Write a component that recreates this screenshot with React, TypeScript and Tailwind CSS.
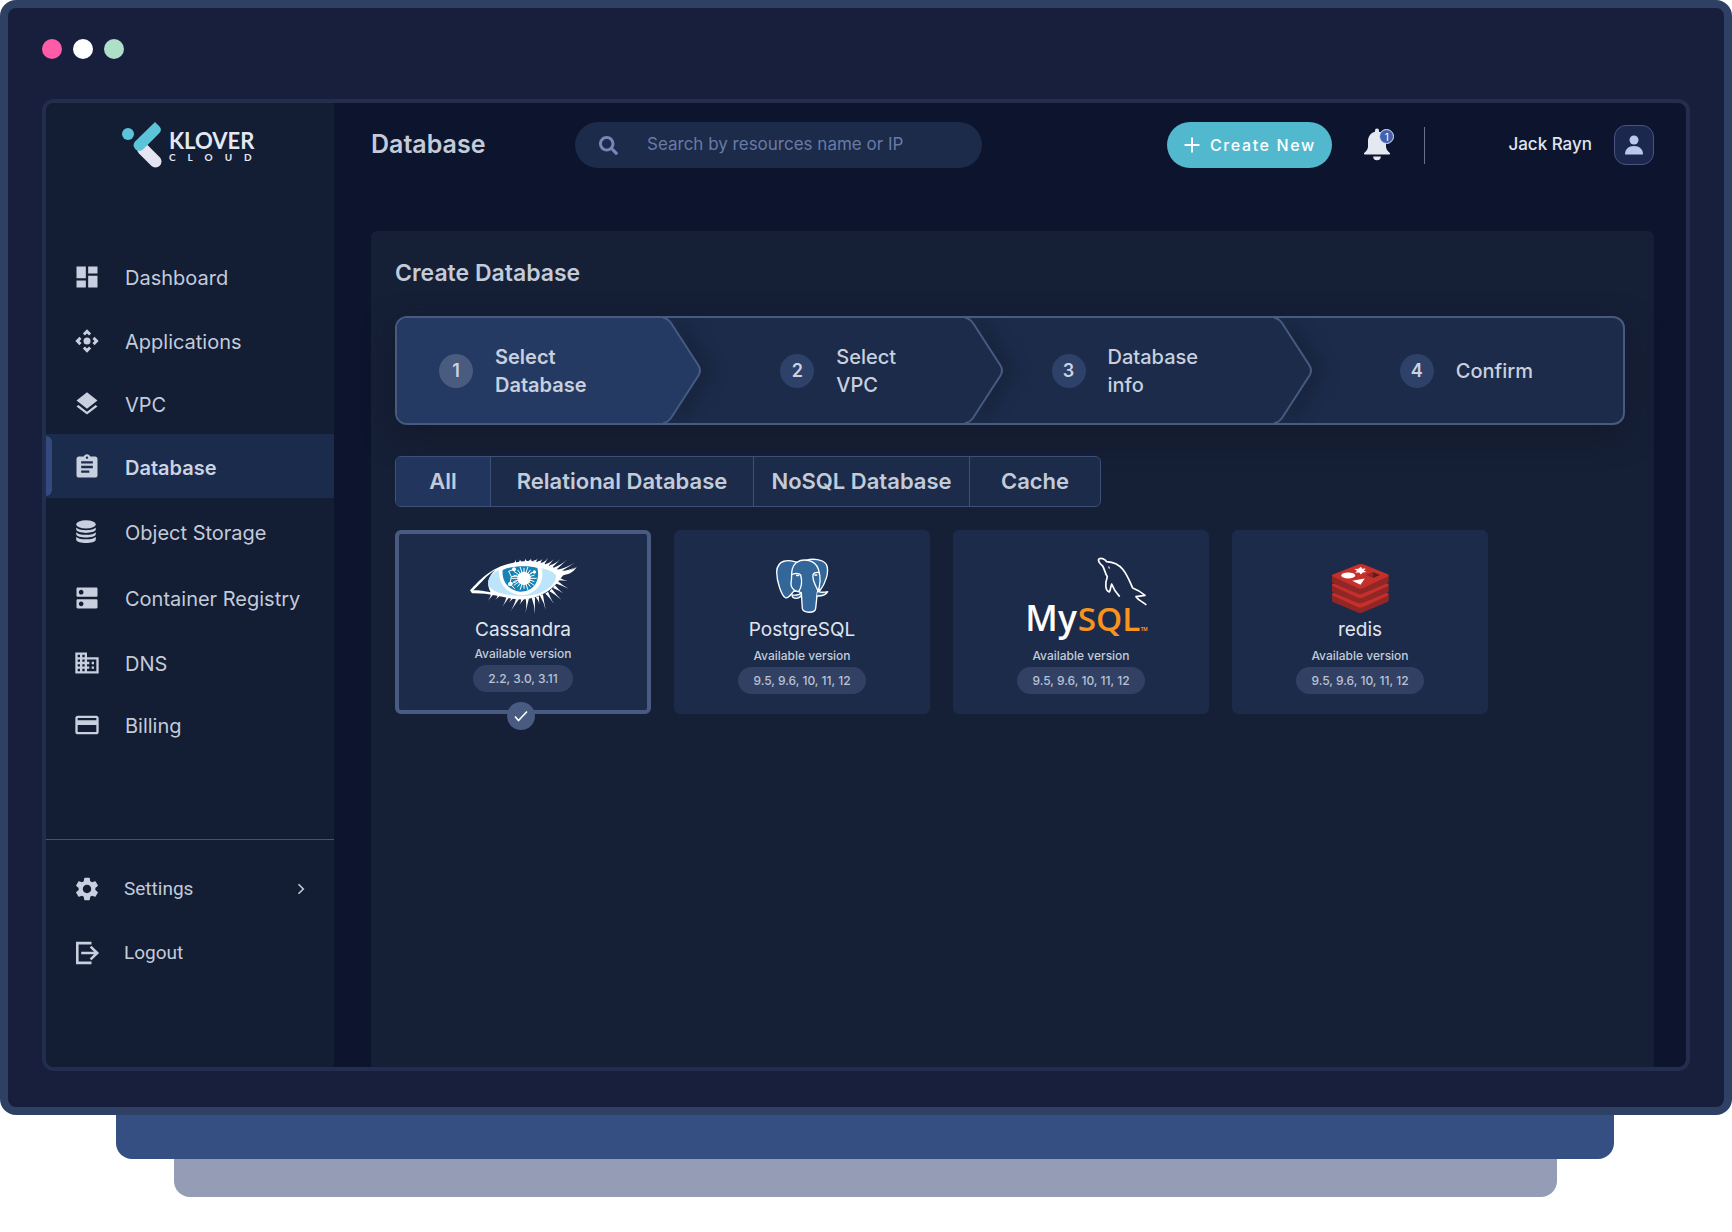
import React from "react";
import {
  MdAssignment,
  MdBusiness,
  MdControlCamera,
  MdCreditCard,
  MdDashboard,
  MdDns,
  MdLayers,
  MdSettings,
} from "react-icons/md";
import { FaSearch } from "react-icons/fa";

const StorageIcon = ({ className }: { className?: string }) => (
  <svg viewBox="0 0 28 28" fill="currentColor" className={className} aria-hidden="true">
    <ellipse cx="13" cy="6.4" rx="9.8" ry="4.2" />
    <path d="M3.2 9.6c2 3.4 17.6 3.4 19.6 0v2c-.6 4.4-19 4.4-19.6 0z" />
    <path d="M3.2 14.2c2 3.4 17.6 3.4 19.6 0v2c-.6 4.4-19 4.4-19.6 0z" />
    <path d="M3.2 18.8c2 3.4 17.6 3.4 19.6 0v3c-.6 4.4-19 4.4-19.6 0z" />
  </svg>
);

const LogoutIcon = ({ className }: { className?: string }) => (
  <svg viewBox="0 0 28 28" fill="none" stroke="currentColor" strokeWidth="2.6" className={className} aria-hidden="true">
    <path d="M18.5 4.1H4.3v19.8h14.2" />
    <path d="M8.2 14h15.600M17.600 7.600l6.600 6.400-6.600 6.400" />
  </svg>
);

const Logo = () => (
  <div className="flex items-center gap-[7px] pl-[75px] pt-[18px]">
    <svg viewBox="121 121 41 47" className="h-[47px] w-[41px]" aria-hidden="true">
      <path d="M143 149l12.500 12.500" stroke="#e3e6f2" strokeWidth="12" strokeLinecap="round" />
      <circle cx="128" cy="134" r="6" fill="#5cc4d9" />
      <path
        d="M155 122l4.500 4.500q3 3.500-.5 7l-15.500 15.500q-4 4-8 .3-3.800-4-.2-8z"
        fill="#5cc4d9"
      />
    </svg>
    <div className="pt-1 text-[#e3e8f2]">
      <div className="font-['Lato'] text-[22px] font-bold leading-5">KLOVER</div>
      <div className="font-['Lato'] text-[10px] font-bold leading-3 tracking-[12px]">CLOUD</div>
    </div>
  </div>
);

const navItems = [
  { label: "Dashboard", Icon: MdDashboard, height: "h-16" },
  { label: "Applications", Icon: MdControlCamera, height: "h-16" },
  { label: "VPC", Icon: MdLayers, height: "h-[62px]" },
  { label: "Database", Icon: MdAssignment, height: "h-16", active: true },
  { label: "Object Storage", Icon: StorageIcon, height: "h-[66px]" },
  { label: "Container Registry", Icon: MdDns, height: "h-[66px]" },
  { label: "DNS", Icon: MdBusiness, height: "h-16" },
  { label: "Billing", Icon: MdCreditCard, height: "h-[60px]" },
];

const Sidebar = () => (
  <aside className="w-72 shrink-0 bg-[#131d34] pb-[82px] text-[#c3cbd9]">
    <div className="h-[141px]">
      <Logo />
    </div>
    <nav>
      <ul>
        {navItems.map(({ label, Icon, height, active }) => (
          <li key={label} className="relative">
            {active && <span className="absolute inset-y-[2px] left-0 w-[6px] rounded-r-[6px] bg-[#34497f]" />}
            <a
              href="#"
              aria-current={active ? "page" : undefined}
              className={`flex items-center gap-6 pl-[27px] pt-[2px] text-xl ${height} ${
                active ? "bg-[#1a2b4b] font-semibold text-[#ccd3e2]" : ""
              }`}
            >
              <Icon className="size-7 shrink-0 text-[#c8cfde]" />
              <span className="pt-[2px]">{label}</span>
            </a>
          </li>
        ))}
      </ul>
    </nav>
    <div className="mt-[85px] border-t border-[#46516d] pt-[17px] font-['Roboto'] text-[19px]">
      <a href="#" className="flex h-16 items-center gap-[23px] pl-[27px] pr-[29px]">
        <MdSettings className="size-7 shrink-0 text-[#c8cfde]" />
        <span className="grow">Settings</span>
        <svg viewBox="0 0 8 12" className="h-3 w-2" fill="none" stroke="currentColor" strokeWidth="1.6" aria-hidden="true">
          <path d="M1.500 1.200L6.300 6l-4.800 4.800" />
        </svg>
      </a>
      <a href="#" className="flex h-16 items-center gap-[23px] pl-[27px]">
        <LogoutIcon className="size-7 shrink-0 text-[#c8cfde]" />
        <span>Logout</span>
      </a>
    </div>
  </aside>
);

const Header = () => (
  <header className="flex items-center pt-[19px]">
    <h1 className="w-[204px] shrink-0 text-[25px] font-semibold text-[#c3cbd9]">Database</h1>
    <div className="flex h-[46px] w-[407px] items-center gap-[29px] rounded-full bg-[#1b2b49] px-6">
      <FaSearch className="size-[19px] shrink-0 text-[#7587b8]" aria-hidden="true" />
      <input
        type="search"
        aria-label="Search by resources name or IP"
        placeholder="Search by resources name or IP"
        className="w-full min-w-0 bg-transparent text-[17px] text-[#c3cbd9] outline-none placeholder:text-[#6a7aa6]"
      />
    </div>
    <div className="ml-auto flex items-center">
      <button
        type="button"
        className="flex h-[46px] w-[165px] items-center justify-center gap-[10px] rounded-full bg-[#52b8cd] text-base font-medium tracking-widest text-white"
      >
        <svg viewBox="0 0 16 16" className="size-4 shrink-0" stroke="currentColor" strokeWidth="2" aria-hidden="true">
          <path d="M8 .5v15M.5 8h15" />
        </svg>
        <span className="whitespace-nowrap">Create New</span>
      </button>
      <button type="button" aria-label="Notifications" className="relative ml-[31px] h-9 w-[31px]">
        <svg viewBox="0 0 28 34" className="h-[34px] w-7" fill="#e3e8f1" aria-hidden="true">
          <path d="M14 .5a2 2 0 0 0-2 2.200v1C7.500 5 5 8.500 5 13v5.500c0 2.500-1.500 4.500-3.800 6.500-.6.700-.2 1.500.6 1.500h24.400c.8 0 1.200-.8.6-1.500-2.300-2-3.800-4-3.800-6.500V13c0-4.500-2.500-8-7-9.300v-1a2 2 0 0 0-2-2.200z" />
          <path d="M10.200 28.500h7.600a3.800 3.800 0 0 1-7.600 0z" />
        </svg>
        <span className="absolute right-0 top-[2px] flex size-[15px] items-center justify-center rounded-full border border-[#dfe5f0] bg-[#4063b0] text-[10px] leading-none text-white">
          1
        </span>
      </button>
      <span className="ml-[30px] h-[37px] w-px bg-[#6b7189]" />
      <span className="ml-[83px] text-[17px] font-medium text-[#e0e5ee]">Jack Rayn</span>
      <button
        type="button"
        aria-label="Account"
        className="ml-[22px] flex size-10 items-center justify-center rounded-xl border border-[#4a5482] bg-[#1c274e]"
      >
        <svg viewBox="0 0 18 20" className="h-5 w-[18px]" fill="#b9c8ee" aria-hidden="true">
          <circle cx="9" cy="5" r="4.500" />
          <path d="M0 19.500c0-5.500 3.500-8.500 9-8.500s9 3 9 8.500z" />
        </svg>
      </button>
    </div>
  </header>
);

const steps = [
  { lines: ["Select", "Database"], pad: "pl-[42px]", active: true },
  { lines: ["Select", "VPC"], pad: "pl-[79px]" },
  { lines: ["Database", "info"], pad: "pl-[49px]" },
  { lines: ["Confirm"], pad: "pl-[88px]" },
];

const Stepper = () => (
  <ol className="grid h-[109px] grid-cols-[305fr_302fr_310fr_312fr] overflow-hidden rounded-xl border-2 border-[#475a80] bg-[#1b2b49] shadow-[0_10px_30px_rgba(20,24,36,0.6)]">
    {steps.map(({ lines, pad, active }, i) => (
      <li key={i} className="flex min-w-0" aria-current={active ? "step" : undefined}>
        <div className={`flex min-w-0 grow items-center gap-[22px] ${pad} ${active ? "bg-[#243a63]" : ""}`}>
          <span
            className={`flex size-[34px] shrink-0 items-center justify-center rounded-full text-lg font-semibold text-[#ccd3e2] ${
              active ? "bg-[#495b7f]" : "bg-[#2d4169]"
            }`}
          >
            {i + 1}
          </span>
          <span className={`text-xl leading-7 text-[#c8d0de] ${active ? "font-semibold" : "font-medium"}`}>
            {lines.map((line) => (
              <span key={line} className="block">
                {line}
              </span>
            ))}
          </span>
        </div>
        {i < steps.length - 1 && (
          <svg
            viewBox="0 0 38 105"
            className="h-full w-[38px] shrink-0 overflow-visible drop-shadow-[14px_0_7px_rgba(20,26,46,0.35)]"
            aria-hidden="true"
          >
            <path
              d="M-1 0C3 0 5 1 8 5L35.500 47.500Q38.500 52.500 35.500 57.500L8 100Q4 105-1 105z"
              fill={active ? "#243a63" : "#1b2b49"}
            />
            <path
              d="M0 0C3 0 5 1 8 5L35.500 47.500Q38.500 52.500 35.500 57.500L8 100Q4 105 0 105"
              fill="none"
              stroke="#475a80"
              strokeWidth="2"
            />
          </svg>
        )}
      </li>
    ))}
  </ol>
);

const filters = [
  { label: "All", width: "w-[94px]" },
  { label: "Relational Database", width: "w-[263px]" },
  { label: "NoSQL Database", width: "w-[216px]" },
  { label: "Cache", width: "w-[131px]" },
];

const Filters = () => (
  <div className="mt-[31px] flex h-[51px] w-fit overflow-hidden rounded-md border border-[#3d5078] bg-[#1b2b49]">
    {filters.map(({ label, width }, i) => (
      <button
        key={label}
        type="button"
        aria-pressed={i === 0}
        className={`text-[22px] font-semibold text-[#c3cbda] ${width} ${
          i === 0 ? "bg-[#22365d]" : "border-l border-[#3d5078]"
        }`}
      >
        {label}
      </button>
    ))}
  </div>
);

// Each lash: base x, base y, tip x, tip y.
const lashes = [
  [338, 248, 323, 273], [358, 252, 345, 270], [385, 256, 366, 291], [398, 260, 386, 278],
  [414, 262, 389, 307], [428, 264, 418, 284], [442, 264, 436, 310], [460, 262, 465, 313],
  [472, 260, 478, 283], [484, 254, 497, 299], [500, 248, 521, 281], [512, 240, 544, 269],
  [522, 230, 550, 250], [528, 215, 566, 236], [532, 206, 565, 212], [405, 160, 406, 148],
  [420, 156, 419, 147], [436, 154, 435, 145], [450, 154, 453, 144], [463, 155, 473, 145],
  [476, 158, 488, 145], [488, 162, 505, 142], [500, 166, 522, 146], [512, 170, 542, 146],
  [524, 177, 563, 147], [534, 184, 588, 156], [542, 190, 594, 168],
];

const lashPath = lashes
  .map(([x, y, tx, ty]) => {
    const length = Math.hypot(tx - x, ty - y);
    const nx = (-(ty - y) / length) * 5;
    const ny = ((tx - x) / length) * 5;
    const cx = (x + tx) / 2 + 2;
    const cy = (y + ty) / 2 + 2;
    return `M${x + nx} ${y + ny}Q${cx} ${cy} ${tx} ${ty}Q${cx} ${cy} ${x - nx} ${y - ny}z`;
  })
  .join("");

const rays = Array.from({ length: 20 }, (_, i) => {
  const angle = (i * Math.PI) / 10;
  const reach = i % 2 ? 33 : 38;
  return `M432 205L${432 + Math.cos(angle) * reach} ${205 + Math.sin(angle) * reach * 0.95}`;
}).join("");

const CassandraLogo = () => (
  <svg viewBox="264 138 330 180" className="h-[60px] w-[110px] overflow-visible" aria-hidden="true">
    <path d="M270 241C305 205 340 160 440 153C500 153 525 178 556 192C535 202 530 250 440 268C380 272 350 248 276 250z" fill="#fff" />
    <path d="M280 241C308 214 322 194 346 180C322 200 320 225 332 247C310 243 300 241 280 241z" fill="#1b2b49" />
    <path d="M350 184C380 168 500 160 528 196C530 225 490 256 430 258C390 258 340 250 326 228C320 210 330 196 350 184z" fill="#bce4fb" />
    <path d="M357 172C385 160 455 158 484 170C497 215 470 254 425 256C380 252 352 220 357 172z" fill="#fff" />
    <path d="M368 180C395 166 450 166 472 174C480 200 470 245 420 245C385 240 365 215 368 180z" fill="#1583b5" />
    <circle cx="432" cy="205" r="20" fill="#fff" />
    <path d={rays} stroke="#fff" strokeWidth="3" />
    <path d="M402 178L386 184L394 200L390 222L404 236M394 200L412 198M390 222L410 215M450 190L463 186" stroke="#fff" strokeWidth="3" fill="none" />
    <circle cx="402" cy="178" r="6" fill="#fff" />
    <circle cx="391" cy="222" r="7" fill="#fff" />
    <circle cx="463" cy="186" r="5" fill="#fff" />
    <path d={lashPath} fill="#fff" />
    <path d="M510 168C535 182 560 190 590 172C575 194 550 200 524 192z" fill="#fff" />
  </svg>
);

const PostgresLogo = () => (
  <svg viewBox="342 136 168 174" className="h-[58px] w-14" fill="#336699" stroke="#fff" strokeWidth="4" strokeLinejoin="round" strokeLinecap="round" aria-hidden="true">
    <path d="M438 146C458 140 488 142 499 158C510 180 495 218 479 238L460 190z" />
    <path d="M411 152C385 142 352 144 350 180C350 210 365 253 376 258C386 262 392 248 402 238L420 200z" />
    <path d="M410 152C432 138 466 146 475 172C482 195 484 218 472 242L467 290C465 306 430 305 427 291L424 244C410 240 392 234 393 214C398 195 388 170 410 152z" />
    <path d="M397 188Q414 181 422 190C427 208 425 226 416 240M478 183Q462 180 459 190C456 206 468 222 474 238" fill="none" />
    <path d="M404 239Q414 236 424 244Q416 252 396 250Q396 260 410 260Q422 258 424 250" />
    <path d="M474 239Q484 244 503 240Q496 254 470 253" />
    <path d="M410 191h6M465 190h5" strokeWidth="5" />
  </svg>
);

const MySqlLogo = () => (
  <svg viewBox="218 138 414 252" className="h-[84px] w-[138px] overflow-visible" role="img" aria-label="MySQL">
    <path
      d="M541 260C530 248 522 236 517 222C513 232 514 241 510 246C498 242 496 222 504 200C497 190 496 178 490 168C480 160 474 150 480 146C488 143 498 149 502 155C548 157 562 192 580 234C596 240 608 248 617 256L590 260C598 272 612 276 621 285"
      fill="none"
      stroke="#fff"
      strokeWidth="5"
      strokeLinejoin="round"
    />
    <path d="M507 167q6 3 4 11q-5-3-4-11z" fill="#fff" />
    <text x="258" y="364" fontFamily="'Open Sans', sans-serif" fontSize="106" fontWeight="600" fill="#fff">
      My
    </text>
    <text x="415" y="364" fontFamily="'Open Sans', sans-serif" fontSize="100" fontWeight="600" fill="#f7941e">
      SQL
    </text>
    <text x="604" y="363" fontFamily="'Open Sans', sans-serif" fontSize="14" fontWeight="700" fill="#f7941e">
      TM
    </text>
  </svg>
);

const RedisLogo = () => (
  <svg viewBox="333 155 178 153" className="mt-1 h-[51px] w-[59px]" aria-hidden="true">
    {[57, 28.5, 0].map((dy) => (
      <g key={dy} transform={`translate(0 ${dy})`}>
        <path d="M336 192L421 229L507 192V211Q506 214 500 217L428 247Q421 250 414 247L342 217Q336 214 336 211z" fill="#912626" />
        <path d="M339 189L415 159Q424 156 432 159L503 188Q511 192 503 196L430 230Q421 234 413 230L340 196Q332 192 339 189z" fill="#c6302b" />
      </g>
    ))}
    <ellipse cx="385" cy="192" rx="21" ry="9" fill="#fff" />
    <path d="M423 166l4 6 11-1-6 6 8 5-11 1-6 6-5-6-12 1 6-6-9-5 13-1z" fill="#fff" />
    <path d="M397 208l38-7-13 19z" fill="#fff" />
    <path d="M438 191l22-9v18z" fill="#912626" />
    <path d="M460 182l21 9-21 9z" fill="#621b1c" />
  </svg>
);

const databases = [
  { id: "cassandra", name: "Cassandra", versions: "2.2, 3.0, 3.11", Art: CassandraLogo, selected: true },
  { id: "postgresql", name: "PostgreSQL", versions: "9.5, 9.6, 10, 11, 12", Art: PostgresLogo },
  { id: "mysql", name: "", versions: "9.5, 9.6, 10, 11, 12", Art: MySqlLogo },
  { id: "redis", name: "redis", versions: "9.5, 9.6, 10, 11, 12", Art: RedisLogo },
];

const DatabaseCards = () => (
  <div className="mt-[23px] flex flex-wrap gap-[23px]">
    {databases.map(({ id, name, versions, Art, selected }) => (
      <button
        key={id}
        type="button"
        aria-pressed={!!selected}
        className={`relative flex h-[184px] w-64 flex-col items-center rounded-md bg-[#1b2b49] ${
          selected ? "border-4 border-[#495b80] pt-[22px]" : "pt-[26px]"
        }`}
      >
        <span className={`flex shrink-0 items-center justify-center ${name ? "h-[60px]" : "h-[88px] pb-1"}`}>
          <Art />
        </span>
        {name && <span className="text-[19px] leading-7 text-[#e0e5ef]">{name}</span>}
        <span className={`text-xs font-medium leading-5 text-[#c3cbda] ${selected ? "" : "mt-[2px]"}`}>
          Available version
        </span>
        <span className="mt-px rounded-full bg-[#324163] px-[15px] text-xs font-medium leading-[27px] text-[#b9c2d6]">
          {versions}
        </span>
        {selected && (
          <span className="absolute -bottom-5 left-[49%] flex size-7 -translate-x-1/2 items-center justify-center rounded-full bg-[#495b80]">
            <svg viewBox="0 0 14 12" className="h-3 w-[14px]" fill="none" stroke="#fff" strokeWidth="1.600" aria-hidden="true">
              <path d="M1 6.500l3.500 4L13 1.500" />
            </svg>
          </span>
        )}
      </button>
    ))}
  </div>
);

export default function App() {
  return (
    <div className="min-h-screen bg-white font-['Inter',sans-serif]">
      <div className="rounded-2xl border-8 border-[#2e4165] bg-[#171f3d] px-[34px] pb-9">
        <div className="flex gap-[11px] pb-10 pt-[31px]">
          <span className="size-5 rounded-full bg-[#ff5ca8]" />
          <span className="size-5 rounded-full bg-white" />
          <span className="size-5 rounded-full bg-[#aee0c8]" />
        </div>
        <div className="flex overflow-hidden rounded-xl border-4 border-[#232d4d] bg-[#0d142e]">
          <Sidebar />
          <main className="flex min-w-0 grow flex-col pl-[37px] pr-8">
            <Header />
            <section className="mt-[63px] grow rounded-t-md bg-[#151f36] pl-6 pr-[29px]">
              <h2 className="pb-[29px] pt-7 text-[23px] font-semibold leading-7 text-[#c3cbd9]">Create Database</h2>
              <Stepper />
              <Filters />
              <DatabaseCards />
            </section>
          </main>
        </div>
      </div>
      <div className="ml-[116px] mr-[118px] h-11 rounded-b-2xl bg-[#364f82]" />
      <div className="ml-[174px] mr-[175px] h-[38px] rounded-b-2xl bg-[#949db5]" />
    </div>
  );
}
